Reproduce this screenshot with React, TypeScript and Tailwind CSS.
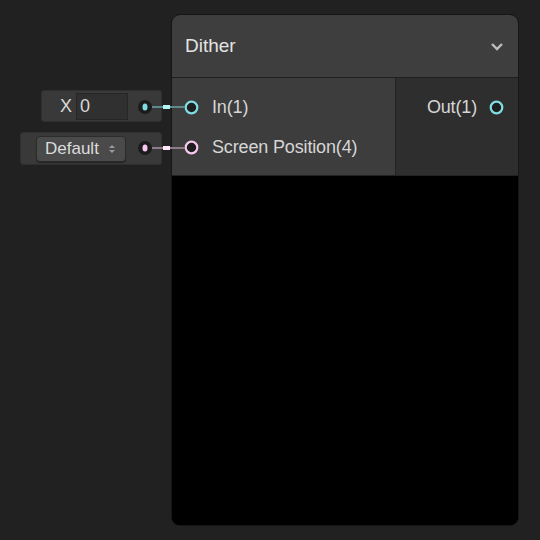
import React from "react";

const font = { fontFamily: '"Liberation Sans", Arial, sans-serif' };

const PortRing = ({ color }: { color: string }) => (
  <svg width="15" height="15" viewBox="0 0 15 15" className="shrink-0">
    <circle cx="7.5" cy="7.5" r="5.8" fill="#1e1e1e" stroke={color} strokeWidth="2.2" />
  </svg>
);

// wire from the inline widget's dot to the node's input port
const Wire = ({ top, color, dim, bright }: { top: number; color: string; dim: string; bright: string }) => (
  <svg
    className="absolute left-[136px] z-10"
    style={{ top }}
    width="50"
    height="16"
    viewBox="0 0 50 16"
  >
    <circle cx="9" cy="8" r="7" fill="#1c1c1c" />
    <ellipse cx="9" cy="8" rx="2.5" ry="3.5" fill={color} />
    <rect x="16" y="7" width="33" height="2" fill={dim} />
    <rect x="27" y="6" width="7" height="4" fill={bright} />
  </svg>
);

export default function App() {
  return (
    <div className="relative w-[540px] h-[540px] bg-[#212121] overflow-hidden" style={font}>
      {/* X field widget */}
      <div className="absolute left-[41px] top-[90px] w-[121px] h-[32px] bg-[#393939] rounded-[3px] border border-[#2f2f2f] flex items-center">
        <span className="ml-[18px] text-[18px] text-[#d8d8d8]">X</span>
        <div className="ml-[4px] w-[52px] h-[27px] bg-[#303030] border border-[#262626] flex items-center">
          <span className="ml-[3px] text-[18px] text-[#d8d8d8]">0</span>
        </div>
      </div>

      {/* Default dropdown widget */}
      <div className="absolute left-[20px] top-[132px] w-[142px] h-[33px] bg-[#393939] rounded-[3px] border border-[#2f2f2f] flex items-center">
        <div className="ml-[15px] w-[90px] h-[26px] bg-[#4a4a4a] rounded-[4px] border border-[#2c2c2c] shadow-[0_1px_1px_rgba(0,0,0,0.4)] flex items-center">
          <span className="ml-[8px] text-[17px] text-[#dcdcdc]">Default</span>
          <svg width="8" height="12" viewBox="0 0 8 12" className="ml-[9px]">
            <path d="M1 5 L4 2 L7 5 Z" fill="#9a9a9a" />
            <path d="M1 7 L4 10 L7 7 Z" fill="#9a9a9a" />
          </svg>
        </div>
      </div>

      <Wire top={99} color="#7fdde3" dim="#5e8a8c" bright="#b4f4f6" />
      <Wire top={140} color="#f6c8ee" dim="#8c7c88" bright="#fde6f8" />

      {/* node */}
      <div className="absolute left-[171px] top-[14px] w-[348px] h-[512px] rounded-[9px] border border-[#161616] overflow-hidden flex flex-col bg-black">
        <div className="h-[63px] bg-[#3e3e3e] flex items-center justify-between px-[13px] border-b border-[#1f1f1f]">
          <span className="text-[19px] text-[#e4e4e4]">Dither</span>
          <svg width="14" height="9" viewBox="0 0 14 9" className="mr-[1px]">
            <path d="M2 2 L7 7 L12 2" fill="none" stroke="#bdbdbd" strokeWidth="2.4" />
          </svg>
        </div>
        <div className="h-[98px] flex border-b border-[#222]">
          <div className="w-[224px] bg-[#3d3d3d] border-r border-[#232323] pt-[9px] flex flex-col">
            <div className="h-[40px] flex items-center pl-[12px]">
              <PortRing color="#7fdde3" />
              <span className="ml-[13px] text-[18px] text-[#d6d6d6] tracking-[-0.15px]">In(1)</span>
            </div>
            <div className="h-[40px] flex items-center pl-[12px]">
              <PortRing color="#f6c8ee" />
              <span className="ml-[13px] text-[18px] text-[#d6d6d6] tracking-[-0.15px]">Screen Position(4)</span>
            </div>
          </div>
          <div className="flex-1 bg-[#2e2e2e] pt-[9px]">
            <div className="h-[40px] flex items-center justify-end pr-[14px]">
              <span className="text-[18px] text-[#d6d6d6] tracking-[-0.15px]">Out(1)</span>
              <span className="ml-[12px] flex">
                <PortRing color="#7fdde3" />
              </span>
            </div>
          </div>
        </div>
        <div className="flex-1 bg-black" />
      </div>
    </div>
  );
}
